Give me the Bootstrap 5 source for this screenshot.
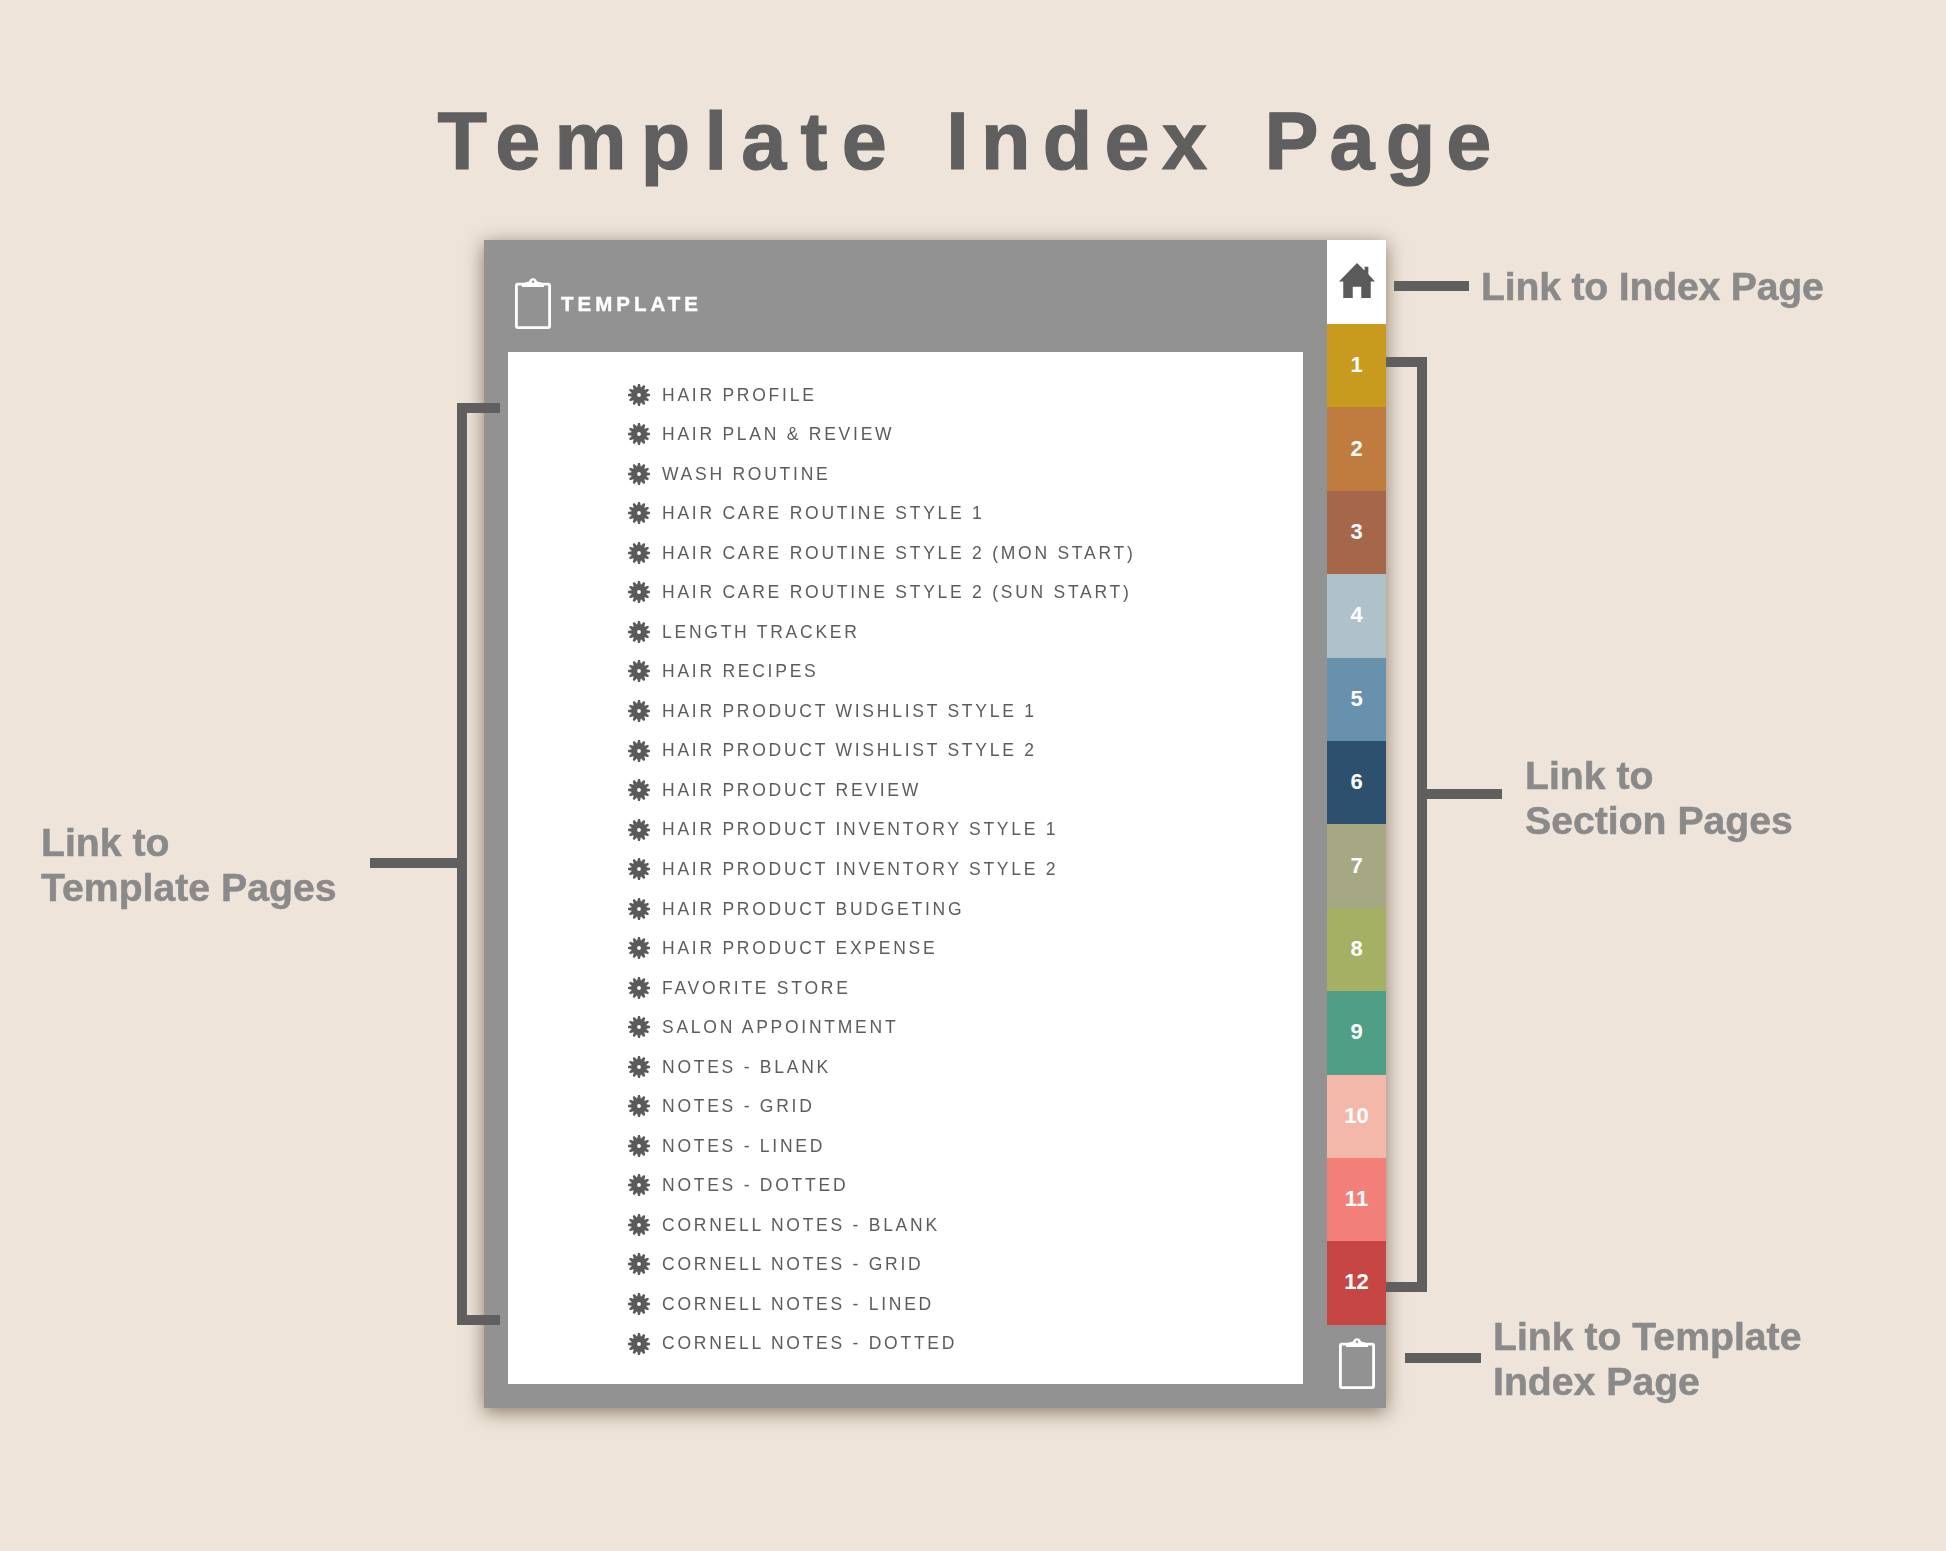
<!DOCTYPE html>
<html lang="en">
<head>
<meta charset="utf-8">
<title>Template Index Page</title>
<link href="https://cdn.jsdelivr.net/npm/bootstrap@5.3.0/dist/css/bootstrap.min.css" rel="stylesheet">
<style>
body{background:#eee4d9;font-family:"Liberation Sans",Arial,sans-serif;min-height:1551px;overflow:hidden}
.doc-wrap{filter:blur(.45px)}
.doc-title{height:240px;padding:101px 6px 0 0;margin:0;font-size:81px;line-height:1;font-weight:700;word-spacing:22.6px;color:#5f5f5f;text-align:center;font-family:"Liberation Sans",Arial,sans-serif;-webkit-text-stroke:1.2px #5f5f5f}
.w1{letter-spacing:14.25px}
.w2{letter-spacing:12.3px}
.w3{letter-spacing:11.1px}
.stage{height:1168px}
.left-col{flex:0 0 484px;padding:578px 26px 0 41px}
.right-col{flex:1 1 auto}
.callout{font-size:39.2px;line-height:45px;font-weight:700;color:#8a8a8a;-webkit-text-stroke:.5px #8a8a8a;height:90px}
.rule{height:10px;background:#5f5f5f;flex:none}
.rule-left{width:88px;margin-left:auto}
.lbl-b{padding-top:8px}
.lbl-c{padding-top:4px}
.lbl-d{padding-top:2px}
.call-home{margin-top:22px;padding-left:8px;height:48px;letter-spacing:-.2px}
.call-home .rule{width:75px;margin-right:12px}
.call-section{margin-top:439px;padding-left:41px}
.call-section .rule{width:75px;margin-right:23px}
.call-template{margin-top:474px;padding-left:19px}
.call-template .rule{width:76px;margin-right:12px}
.bracket{position:absolute;border:10px solid #5f5f5f}
.bracket-left{left:457px;top:163px;width:43px;height:922px;border-right:0;z-index:2}
.bracket-right{left:1386px;top:117px;width:41px;height:935px;border-left:0}
.planner{flex:0 0 902px;background:#929292;box-shadow:0 4px 18px rgba(70,50,30,.6)}
.sheet-area{flex:1 1 auto;min-width:0}
.sheet-head{height:112px;padding:38px 0 0 31px;color:#fff;gap:10px}
.sheet-name{font-size:20.5px;font-weight:700;letter-spacing:4px;line-height:1;margin-top:16px;-webkit-text-stroke:.4px #fff}
.sheet{margin:0 24px 24px 24px;height:1032px;background:#fff;padding:23px 0 0 120px}
.entry{height:39.54px;gap:12px;font-size:17.5px;letter-spacing:2.75px;color:#5c5c5c;white-space:nowrap}
.entry svg{width:22px;height:22px;flex:none;fill:#5a5a5a}
.rail{flex:0 0 59px}
.rail-home{height:84px;background:#fff;padding-bottom:4px}
.rail-tab{height:83.4px;color:#fff;font-size:22px;font-weight:700;text-decoration:none;padding-bottom:2px}
.rail-foot{flex:1 1 auto;padding-bottom:6px}
.t1{background:#c89b1f}.t2{background:#c07c3f}.t3{background:#a5664a}.t4{background:#afc2ca}
.t5{background:#6791ad}.t6{background:#2c506d}.t7{background:#a5a883}.t8{background:#a6b064}
.t9{background:#4f9f87}.t10{background:#f4b8ab}.t11{background:#f37f79}.t12{background:#c54642}
</style>
</head>
<body>
<svg width="0" height="0" class="position-absolute" aria-hidden="true">
  <defs>
    <path id="tooth" d="M-2.100-6.500-.9-11 .9-11 2.100-6.500Z"/>
    <symbol id="gear" viewBox="-11 -11 22 22">
      <path fill-rule="evenodd" d="M0-7.500A7.500 7.500 0 1 1 0 7.500 7.500 7.500 0 1 1 0-7.500ZM0-1.900A1.900 1.900 0 1 0 0 1.900 1.900 1.900 0 1 0 0-1.900Z"/>
      <use href="#tooth"/><use href="#tooth" transform="rotate(30)"/><use href="#tooth" transform="rotate(60)"/><use href="#tooth" transform="rotate(90)"/>
      <use href="#tooth" transform="rotate(120)"/><use href="#tooth" transform="rotate(150)"/><use href="#tooth" transform="rotate(180)"/><use href="#tooth" transform="rotate(210)"/>
      <use href="#tooth" transform="rotate(240)"/><use href="#tooth" transform="rotate(270)"/><use href="#tooth" transform="rotate(300)"/><use href="#tooth" transform="rotate(330)"/>
    </symbol>
    <symbol id="clip" viewBox="0 0 36 51">
      <rect x="1.400" y="6.200" width="33.200" height="43.400" rx="1.500" fill="none" stroke="#fff" stroke-width="2.800"/>
      <path fill="#fff" d="M7 9V5.500L14 3.500C15-1 21-1 22 3.500L29 5.500V9Z"/>
      <circle cx="18" cy="3.800" r="1.200" fill="#929292"/>
    </symbol>
  </defs>
</svg>
<div class="doc-wrap">
<h1 class="doc-title"><span class="w1">Template</span> <span class="w2">Index</span> <span class="w3">Page</span></h1>
<div class="stage d-flex position-relative">
  <div class="left-col">
    <div class="d-flex align-items-center callout">
      <div class="lbl-c">Link to<br>Template Pages</div>
      <div class="rule rule-left"></div>
    </div>
  </div>
  <div class="bracket bracket-left"></div>
  <div class="planner d-flex">
    <div class="sheet-area">
      <div class="sheet-head d-flex">
        <svg width="36" height="51"><use href="#clip"/></svg>
        <span class="sheet-name">TEMPLATE</span>
      </div>
      <div class="sheet">
        <ul class="list-unstyled m-0">
          <li class="entry d-flex align-items-center"><svg><use href="#gear"/></svg>HAIR PROFILE</li>
          <li class="entry d-flex align-items-center"><svg><use href="#gear"/></svg>HAIR PLAN &amp; REVIEW</li>
          <li class="entry d-flex align-items-center"><svg><use href="#gear"/></svg>WASH ROUTINE</li>
          <li class="entry d-flex align-items-center"><svg><use href="#gear"/></svg>HAIR CARE ROUTINE STYLE 1</li>
          <li class="entry d-flex align-items-center"><svg><use href="#gear"/></svg>HAIR CARE ROUTINE STYLE 2 (MON START)</li>
          <li class="entry d-flex align-items-center"><svg><use href="#gear"/></svg>HAIR CARE ROUTINE STYLE 2 (SUN START)</li>
          <li class="entry d-flex align-items-center"><svg><use href="#gear"/></svg>LENGTH TRACKER</li>
          <li class="entry d-flex align-items-center"><svg><use href="#gear"/></svg>HAIR RECIPES</li>
          <li class="entry d-flex align-items-center"><svg><use href="#gear"/></svg>HAIR PRODUCT WISHLIST STYLE 1</li>
          <li class="entry d-flex align-items-center"><svg><use href="#gear"/></svg>HAIR PRODUCT WISHLIST STYLE 2</li>
          <li class="entry d-flex align-items-center"><svg><use href="#gear"/></svg>HAIR PRODUCT REVIEW</li>
          <li class="entry d-flex align-items-center"><svg><use href="#gear"/></svg>HAIR PRODUCT INVENTORY STYLE 1</li>
          <li class="entry d-flex align-items-center"><svg><use href="#gear"/></svg>HAIR PRODUCT INVENTORY STYLE 2</li>
          <li class="entry d-flex align-items-center"><svg><use href="#gear"/></svg>HAIR PRODUCT BUDGETING</li>
          <li class="entry d-flex align-items-center"><svg><use href="#gear"/></svg>HAIR PRODUCT EXPENSE</li>
          <li class="entry d-flex align-items-center"><svg><use href="#gear"/></svg>FAVORITE STORE</li>
          <li class="entry d-flex align-items-center"><svg><use href="#gear"/></svg>SALON APPOINTMENT</li>
          <li class="entry d-flex align-items-center"><svg><use href="#gear"/></svg>NOTES - BLANK</li>
          <li class="entry d-flex align-items-center"><svg><use href="#gear"/></svg>NOTES - GRID</li>
          <li class="entry d-flex align-items-center"><svg><use href="#gear"/></svg>NOTES - LINED</li>
          <li class="entry d-flex align-items-center"><svg><use href="#gear"/></svg>NOTES - DOTTED</li>
          <li class="entry d-flex align-items-center"><svg><use href="#gear"/></svg>CORNELL NOTES - BLANK</li>
          <li class="entry d-flex align-items-center"><svg><use href="#gear"/></svg>CORNELL NOTES - GRID</li>
          <li class="entry d-flex align-items-center"><svg><use href="#gear"/></svg>CORNELL NOTES - LINED</li>
          <li class="entry d-flex align-items-center"><svg><use href="#gear"/></svg>CORNELL NOTES - DOTTED</li>
        </ul>
      </div>
    </div>
    <nav class="rail d-flex flex-column">
      <div class="rail-home d-flex align-items-center justify-content-center">
        <svg width="36" height="37" viewBox="0 0 38 37"><path fill="#5a5a5a" d="M19 0 27 8V4H31V12L38 19.500H33.500V37H23.500V25H14.500V37H4.500V19.500H0Z"/></svg>
      </div>
      <a class="rail-tab t1 d-flex align-items-center justify-content-center" href="#">1</a>
      <a class="rail-tab t2 d-flex align-items-center justify-content-center" href="#">2</a>
      <a class="rail-tab t3 d-flex align-items-center justify-content-center" href="#">3</a>
      <a class="rail-tab t4 d-flex align-items-center justify-content-center" href="#">4</a>
      <a class="rail-tab t5 d-flex align-items-center justify-content-center" href="#">5</a>
      <a class="rail-tab t6 d-flex align-items-center justify-content-center" href="#">6</a>
      <a class="rail-tab t7 d-flex align-items-center justify-content-center" href="#">7</a>
      <a class="rail-tab t8 d-flex align-items-center justify-content-center" href="#">8</a>
      <a class="rail-tab t9 d-flex align-items-center justify-content-center" href="#">9</a>
      <a class="rail-tab t10 d-flex align-items-center justify-content-center" href="#">10</a>
      <a class="rail-tab t11 d-flex align-items-center justify-content-center" href="#">11</a>
      <a class="rail-tab t12 d-flex align-items-center justify-content-center" href="#">12</a>
      <div class="rail-foot d-flex align-items-center justify-content-center">
        <svg width="36" height="51"><use href="#clip"/></svg>
      </div>
    </nav>
  </div>
  <div class="right-col">
    <div class="d-flex align-items-center callout call-home"><div class="rule"></div><div>Link to Index Page</div></div>
    <div class="d-flex align-items-center callout call-section"><div class="rule"></div><div class="lbl-b">Link to<br>Section Pages</div></div>
    <div class="d-flex align-items-center callout call-template"><div class="rule"></div><div class="lbl-d">Link to Template<br>Index Page</div></div>
  </div>
  <div class="bracket bracket-right"></div>
</div>
</div>
<script src="https://cdn.jsdelivr.net/npm/bootstrap@5.3.0/dist/js/bootstrap.bundle.min.js"></script>
</body>
</html>
